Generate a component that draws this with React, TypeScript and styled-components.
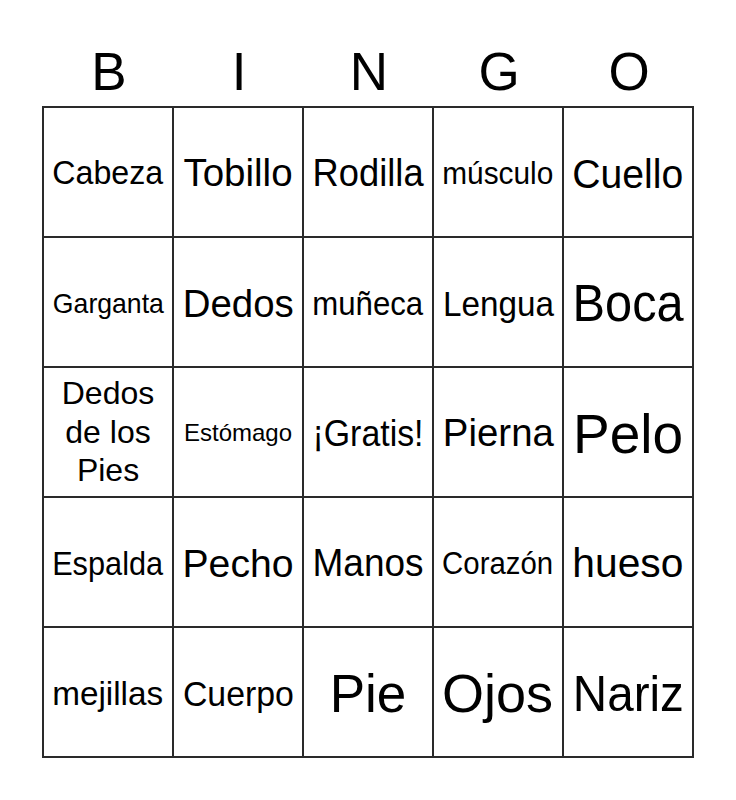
import React from "react";
import styled, { createGlobalStyle } from "styled-components";

const FONT = '"Liberation Sans", Arial, sans-serif';
const MAX_W = 111;

const Global = createGlobalStyle`
  html, body { margin: 0; padding: 0; background: #fff; }
  body { font-family: ${FONT}; color: #000; }
`;

const Page = styled.div`
  width: 736px;
  padding-top: 37px;
  display: flex;
  flex-direction: column;
  align-items: center;
`;

const Header = styled.div`
  display: grid;
  grid-template-columns: repeat(5, 130px);
  width: 652px;
  height: 69px;
  padding-left: 2px;
  box-sizing: border-box;
`;

const Letter = styled.div`
  display: flex;
  align-items: center;
  justify-content: center;
  font-size: 53px;
  line-height: 1;
`;

const Board = styled.div`
  display: grid;
  grid-template-columns: repeat(5, 130px);
  grid-auto-rows: 130px;
  border-top: 2px solid #2a2a2a;
  border-left: 2px solid #2a2a2a;
`;

const Cell = styled.div<{ $multi: boolean }>`
  box-sizing: border-box;
  border-right: 2px solid #2a2a2a;
  border-bottom: 2px solid #2a2a2a;
  padding-top: ${(p) => (p.$multi ? 0 : 3)}px;
  display: flex;
  flex-direction: column;
  align-items: center;
  justify-content: center;
  text-align: center;
  overflow: visible;
`;

const Line = styled.span<{ $size: number }>`
  display: block;
  white-space: nowrap;
  font-size: ${(p) => p.$size}px;
  line-height: 1.2;
  transform-origin: center;
`;

let ctx: CanvasRenderingContext2D | null = null;
function measure(text: string, size: number): number {
  if (typeof document === "undefined") return 0;
  if (!ctx) ctx = document.createElement("canvas").getContext("2d");
  if (!ctx) return 0;
  ctx.font = `${size}px "Liberation Sans"`;
  return ctx.measureText(text).width;
}

function FitLine({ text, size }: { text: string; size: number }) {
  const w = measure(text, size);
  const sx = w > MAX_W ? MAX_W / w : 1;
  return (
    <Line $size={size} style={sx < 1 ? { transform: `scaleX(${sx})` } : undefined}>
      {text}
    </Line>
  );
}

const cells: [string, number][] = [
  ["Cabeza", 33.5], ["Tobillo", 38.5], ["Rodilla", 38], ["músculo", 31], ["Cuello", 40],
  ["Garganta", 28], ["Dedos", 39.6], ["muñeca", 33], ["Lengua", 35], ["Boca", 51],
  ["Dedos\nde los\nPies", 32], ["Estómago", 24], ["¡Gratis!", 36], ["Pierna", 39], ["Pelo", 55],
  ["Espalda", 33], ["Pecho", 39.5], ["Manos", 38], ["Corazón", 31], ["hueso", 41],
  ["mejillas", 34], ["Cuerpo", 35], ["Pie", 53], ["Ojos", 54], ["Nariz", 50],
];

export default function App() {
  return (
    <Page>
      <Global />
      <Header>
        {"BINGO".split("").map((l) => (
          <Letter key={l}>{l}</Letter>
        ))}
      </Header>
      <Board>
        {cells.map(([t, s], i) => {
          const lines = t.split("\n");
          return (
            <Cell key={i} $multi={lines.length > 1}>
              {lines.map((line, j) => (
                <FitLine key={j} text={line} size={s} />
              ))}
            </Cell>
          );
        })}
      </Board>
    </Page>
  );
}
